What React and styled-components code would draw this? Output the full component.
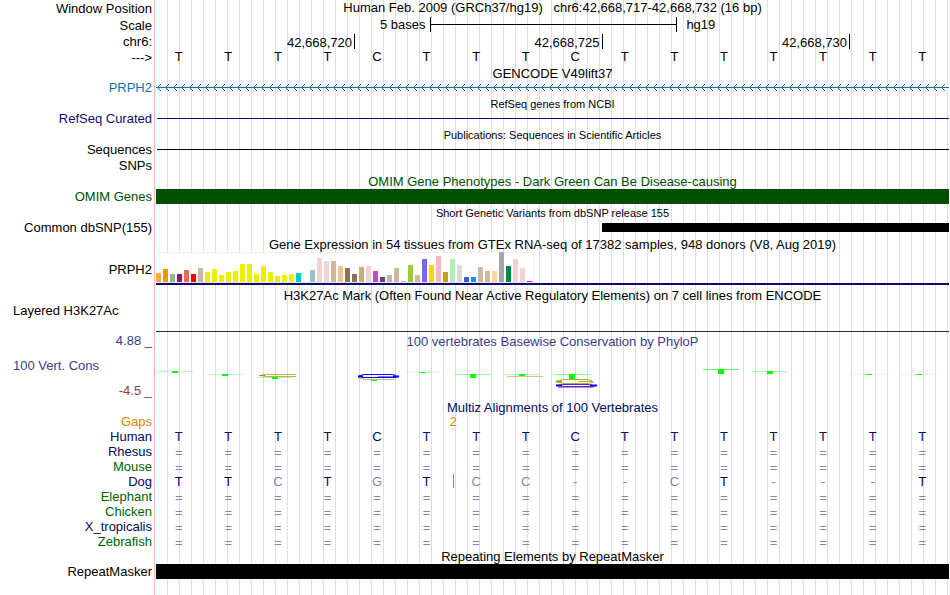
import React from 'react';
import styled, { createGlobalStyle } from 'styled-components';

const REFERENCE = 'TTTTCTTTCTTTTTTT';
const SAME = '================';

const SPECIES = [
	{ name: 'Human', color: '#000a64', bases: REFERENCE },
	{ name: 'Rhesus', color: '#000a64', bases: SAME },
	{ name: 'Mouse', color: '#006400', bases: SAME },
	{ name: 'Dog', color: '#000a64', bases: 'TTCTGTCC--CT---T', insert: true },
	{ name: 'Elephant', color: '#006400', bases: SAME },
	{ name: 'Chicken', color: '#006400', bases: SAME },
	{ name: 'X_tropicalis', color: '#000a64', bases: SAME },
	{ name: 'Zebrafish', color: '#006400', bases: SAME }
];

// [median expression height, tissue color]
const TISSUES = [
	[9, '#ffa54f'], [13, '#ee9a00'], [8, '#8fbc8f'], [8, '#8b1c62'], [12, '#ee6a50'], [8, '#ff0000'],
	[14, '#cdb79e'], [10, '#eeee00'], [13, '#eeee00'], [7, '#eeee00'], [10, '#eeee00'], [11, '#eeee00'],
	[18, '#eeee00'], [18, '#eeee00'], [8, '#eeee00'], [16, '#eeee00'], [10, '#eeee00'], [6, '#eeee00'],
	[7, '#eeee00'], [8, '#eeee00'], [9, '#00cdcd'], [0, '#ee82ee'], [12, '#9ac0cd'], [24, '#eed5d2'],
	[21, '#eed5d2'], [21, '#cdb79e'], [16, '#eec591'], [14, '#8b7355'], [8, '#8b7355'], [15, '#cdaa7d'],
	[16, '#eed5d2'], [11, '#b452cd'], [5, '#7a378b'], [7, '#cdb79e'], [14, '#cdb79e'], [1, '#cdb79e'],
	[17, '#9acd32'], [7, '#cdb79e'], [23, '#7b68ee'], [17, '#ffd700'], [26, '#ffb6c1'], [10, '#cd9b1d'],
	[23, '#b4eeb4'], [17, '#d9d9d9'], [5, '#3a5fcd'], [5, '#1e90ff'], [15, '#cdb79e'], [11, '#cdb79e'],
	[11, '#ffd39b'], [30, '#a6a6a6'], [16, '#008b45'], [23, '#eed5d2'], [14, '#eed5d2'], [1, '#ff00ff']
];

// flattened T letters of the conservation logo
const T_MARKS = [
	{ x: 1, y: 21, h: 2, bar: 0.3 },
	{ x: 51, y: 24, h: 2, bar: 0.25 },
	{ x: 101, y: 27, h: 2, bar: 0.3 },
	{ x: 200, y: 30, h: 1, bar: 0 },
	{ x: 249, y: 22, h: 1, bar: 0.15 },
	{ x: 299, y: 24, h: 4, bar: 0.4 },
	{ x: 348, y: 24, h: 2, bar: 0.3 },
	{ x: 398, y: 24, h: 5, bar: 0.5 },
	{ x: 547, y: 19, h: 5, bar: 0.6 },
	{ x: 596, y: 21, h: 3, bar: 0.35 },
	{ x: 695, y: 24, h: 1, bar: 0.12 },
	{ x: 745, y: 24, h: 1, bar: 0.12 }
];

const Bases = ({ letters, color, faded, children }) => (
	<BaseRow $low={letters === SAME}>
		{letters.split('').map((letter, i) => (
			<Base key={i} $color={faded && letter !== REFERENCE[i] ? '#8484b8' : color}>
				{letter}
			</Base>
		))}
		{children}
	</BaseRow>
);

const TitleRow = ({ children, $height, ...props }) => (
	<Row $height={$height}>
		<Label />
		<Title {...props}>{children}</Title>
	</Row>
);

const GeneArrows = () => (
	<ArrowSvg aria-hidden="true">
		<defs>
			<pattern id="strand" width="8" height="15" patternUnits="userSpaceOnUse">
				<path d="M5 4L1.5 7.5L5 11" fill="none" stroke="#0c72b0" strokeWidth="1" />
				<rect x="0" y="7" width="8" height="1" fill="#0c72b0" />
			</pattern>
		</defs>
		<rect width="100%" height="15" fill="url(#strand)" />
	</ArrowSvg>
);

const ConservationLogo = () => (
	<LogoSvg width="793" height="50" aria-hidden="true">
		{/* squashed G and C letters */}
		<g fill="none">
			<path d="M140 24.5H110L104 25.5L110 26.5H140V25.5" stroke="#a09600" strokeOpacity="0.7" />
			<path d="M103 25.5H109" stroke="#a09600" />
			<path d="M240 25.5L236 24.5H208L203 26L208 27.5H238L242 26.5" stroke="#0000ff" />
			<path d="M202 26.5H207M237 26.5H243" stroke="#0000ff" strokeWidth="2" />
			<path d="M222 26.5H242" stroke="#0000ff" strokeOpacity="0.5" />
			<path d="M202 28.5H208M207 29.5H237L240 28.5" stroke="#a09600" strokeOpacity="0.6" />
			<path d="M351 26.5H387" stroke="#a09600" strokeOpacity="0.5" />
			<path d="M436 30.5L430 29.5H407L401 31.5L407 33.5H432L437 32.5V31.5H422" stroke="#a09600" strokeOpacity="0.8" />
			<path d="M400 31.5H406" stroke="#a09600" strokeWidth="2" />
			<path d="M436 35L432 34.5H407L401 35.5L407 36.5H434L440 35.5" stroke="#0000ff" strokeOpacity="0.8" />
			<path d="M400 35.5H406M434 35.5H441" stroke="#0000ff" strokeWidth="2" />
			<path d="M402 37.5H438" stroke="#ff0000" strokeOpacity="0.5" />
		</g>
		{T_MARKS.map(mark => (
			<g key={mark.x} fill="#00ff00">
				<rect x={mark.x} y={mark.y} width="36" height="1" opacity={mark.bar} />
				<rect x={mark.x + 15} y={mark.y} width="6" height={mark.h} />
			</g>
		))}
	</LogoSvg>
);

export default function App() {
	return (
		<Browser>
			<GlobalStyle />
			<Row $height={17}>
				<Label>Window Position</Label>
				<Title $top>
					Human Feb. 2009 (GRCh37/hg19) &nbsp; chr6:42,668,717-42,668,732 (16 bp)
				</Title>
			</Row>
			<Row $height={17}>
				<Label>Scale</Label>
				<ScaleRow>
					<ScaleText>5 bases</ScaleText>
					<ScaleBar />
					<ScaleUnit>hg19</ScaleUnit>
				</ScaleRow>
			</Row>
			<Row>
				<Label>chr6:</Label>
				<RulerRow>
					<Tick $bases={4}>42,668,720</Tick>
					<Tick $bases={5}>42,668,725</Tick>
					<Tick $bases={5}>42,668,730</Tick>
				</RulerRow>
			</Row>
			<Row $height={17}>
				<Label>---&gt;</Label>
				<Bases letters={REFERENCE} color="#000" />
			</Row>

			<TitleRow $height={14}>GENCODE V49lift37</TitleRow>
			<Row>
				<Label $color="#0c72b0">PRPH2</Label>
				<Track>
					<GeneArrows />
				</Track>
			</Row>

			<TitleRow $height={16} $small>RefSeq genes from NCBI</TitleRow>
			<Row>
				<Label $color="#0c0c78">RefSeq Curated</Label>
				<Track>
					<Line $color="#0c0c78" />
				</Track>
			</Row>

			<TitleRow $height={16} $small>Publications: Sequences in Scientific Articles</TitleRow>
			<Row>
				<Label>Sequences</Label>
				<Track>
					<Line $color="#000" />
				</Track>
			</Row>
			<Row $height={17}>
				<Label>SNPs</Label>
			</Row>

			<TitleRow $color="#005000">
				OMIM Gene Phenotypes - Dark Green Can Be Disease-causing
			</TitleRow>
			<Row>
				<Label $color="#005000">OMIM Genes</Label>
				<Track>
					<Block $color="#005000" />
				</Track>
			</Row>

			<TitleRow $height={16} $small>Short Genetic Variants from dbSNP release 155</TitleRow>
			<Row>
				<Label>Common dbSNP(155)</Label>
				<Track>
					<Variant />
				</Track>
			</Row>

			<TitleRow $height={17}>
				Gene Expression in 54 tissues from GTEx RNA-seq of 17382 samples, 948 donors (V8, Aug 2019)
			</TitleRow>
			<Row $height={36}>
				<Label>PRPH2</Label>
				<Expression>
					<Chart>
						{TISSUES.map(([height, color], i) => (
							<Bar key={i} $color={color} style={{ height }} />
						))}
					</Chart>
				</Expression>
			</Row>

			<TitleRow>
				H3K27Ac Mark (Often Found Near Active Regulatory Elements) on 7 cell lines from ENCODE
			</TitleRow>
			<Row $height={29}>
				<WideLabel>Layered H3K27Ac</WideLabel>
				<Signal />
			</Row>

			<Row $height={17}>
				<Label $color="#3c3c8c">4.88 _</Label>
				<Title $color="#3c3c8c">100 vertebrates Basewise Conservation by PhyloP</Title>
			</Row>
			<Row $height={51}>
				<ConsLabels>
					<WideLabel $color="#3c3c8c">100 Vert. Cons</WideLabel>
					<Label $color="#8c3c3c">-4.5 _</Label>
				</ConsLabels>
				<Track>
					<ConservationLogo />
				</Track>
			</Row>

			<TitleRow $color="#000a64">Multiz Alignments of 100 Vertebrates</TitleRow>
			<Row $height={14}>
				<Label $color="#dc8200">Gaps</Label>
				<GapCount>2</GapCount>
			</Row>
			{SPECIES.map(({ name, color, bases, insert }) => (
				<Row key={name}>
					<Label $color={color}>{name}</Label>
					<Bases letters={bases} color="#000a64" faded>
						{insert && <InsertMark />}
					</Bases>
				</Row>
			))}

			<TitleRow>Repeating Elements by RepeatMasker</TitleRow>
			<Row>
				<Label>RepeatMasker</Label>
				<Track>
					<Block $color="#000" />
				</Track>
			</Row>
		</Browser>
	);
}

const GlobalStyle = createGlobalStyle`
	body {
		margin: 0;
		background: #fff;
	}
	* {
		box-sizing: border-box;
	}
`;

const Browser = styled.main`
	min-height: 100vh;
	padding: 0 1px 16px 0;
	font-family: "Liberation Sans", Arial, Helvetica, sans-serif;
	font-size: 13px;
	color: #000;
	white-space: nowrap;
	overflow: hidden;
	background:
		linear-gradient(#ffb4b4, #ffb4b4) 154px 0 / 1px 100% no-repeat,
		repeating-linear-gradient(to right, transparent 0 11px, #dcdcf8 11px 12px) 156px 0 / calc(100% - 157px) 100% no-repeat;
`;

const Row = styled.div`
	display: grid;
	grid-template-columns: 154px minmax(0, 1fr);
	grid-template-rows: 100%;
	column-gap: 2px;
	height: ${p => p.$height || 15}px;
	line-height: ${p => p.$height || 15}px;
`;

const Label = styled.div`
	display: flex;
	align-items: center;
	justify-content: flex-end;
	padding-right: 2px;
	color: ${p => p.$color || '#000'};
`;

const WideLabel = styled.div`
	padding-left: 13px;
	line-height: 15px;
	color: ${p => p.$color || '#000'};
`;

const ConsLabels = styled.div`
	display: flex;
	flex-direction: column;
	gap: 10px;
	padding-top: 9px;
	line-height: 15px;
`;

const Title = styled.div`
	align-self: ${p => (p.$top ? 'start' : 'safe end')};
	text-align: center;
	line-height: ${p => (p.$small ? 13 : 15)}px;
	font-size: ${p => (p.$small ? 11 : 13)}px;
	color: ${p => p.$color || '#000'};
`;

const Track = styled.div`
	display: flex;
	align-items: center;
	min-width: 0;
	overflow: hidden;
`;

const Line = styled.div`
	flex: 1;
	height: 1px;
	margin-left: 1px;
	background: ${p => p.$color};
`;

const Block = styled.div`
	flex: 1;
	height: 15px;
	background: ${p => p.$color};
`;

const Variant = styled.div`
	width: 43.75%;
	height: 9px;
	margin-left: auto;
	background: #000;
`;

const ScaleRow = styled.div`
	display: flex;
	line-height: 15px;
`;

const ScaleText = styled.div`
	width: 34.5%;
	padding-right: 4px;
	text-align: right;
`;

const ScaleBar = styled.div`
	width: 31.25%;
	height: 15px;
	border: solid #000;
	border-width: 0 1px;
	background: linear-gradient(#000, #000) 0 7px / 100% 1px no-repeat;
`;

const ScaleUnit = styled.div`
	padding-left: 9px;
`;

const RulerRow = styled.div`
	display: flex;
	padding-left: 1px;
	line-height: 17px;
`;

const Tick = styled.div`
	width: calc(100% * ${p => p.$bases} / 16);
	height: 15px;
	padding-right: 2px;
	border-right: 1px solid #000;
	text-align: right;
`;

const BaseRow = styled.div`
	position: relative;
	display: grid;
	grid-template-columns: repeat(16, minmax(0, 1fr));
	margin: 0 2px 0 -2px;
	line-height: ${p => (p.$low ? 17 : 15)}px;
`;

const Base = styled.span`
	text-align: center;
	color: ${p => p.$color};
`;

const InsertMark = styled.i`
	position: absolute;
	top: 0;
	left: calc(37.5% + 2px);
	width: 1px;
	height: 14px;
	background: #dc8200;
`;

const GapCount = styled.div`
	width: 75%;
	text-align: center;
	color: #dc8200;
`;

const ArrowSvg = styled.svg`
	display: block;
	width: 100%;
	height: 15px;
`;

const LogoSvg = styled.svg`
	display: block;
	flex: none;
	margin-top: 1px;
`;

const Expression = styled.div`
	height: 33px;
	border-bottom: 2px solid #0c0c78;
`;

const Chart = styled.div`
	display: flex;
	align-items: flex-end;
	gap: 2px;
	width: 378px;
	height: 31px;
	border-bottom: 1px solid #e6e6e6;
	background: #fff;
	box-shadow: inset 0 1px #f0f0f0, inset -1px 0 #f0f0f0;
`;

const Bar = styled.div`
	flex: none;
	width: 5px;
	background: ${p => p.$color};
`;

const Signal = styled.div`
	border-bottom: 1px solid #28285a;
`;
